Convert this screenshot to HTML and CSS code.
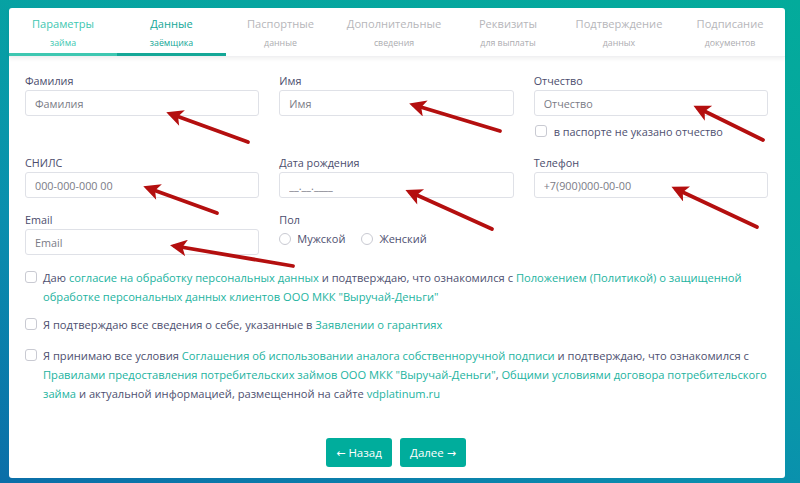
FILE: index.html
```html
<!DOCTYPE html>
<html lang="ru">
<head>
<meta charset="utf-8">
<title>Данные заёмщика</title>
<link rel="stylesheet" href="styles.css">
</head>
<body>
<div class="card">
  <nav class="tabs">
    <div class="tab done"><div class="tt">Параметры</div><div class="ts">займа</div></div>
    <div class="tab active"><div class="tt">Данные</div><div class="ts">заёмщика</div></div>
    <div class="tab"><div class="tt">Паспортные</div><div class="ts">данные</div></div>
    <div class="tab"><div class="tt">Дополнительные</div><div class="ts">сведения</div></div>
    <div class="tab"><div class="tt">Реквизиты</div><div class="ts">для выплаты</div></div>
    <div class="tab"><div class="tt">Подтверждение</div><div class="ts">данных</div></div>
    <div class="tab"><div class="tt">Подписание</div><div class="ts">документов</div></div>
  </nav>
  <form class="form">
    <div class="grid">
      <div class="field">
        <label class="lbl">Фамилия</label>
        <input class="inp" type="text" placeholder="Фамилия">
      </div>
      <div class="field">
        <label class="lbl">Имя</label>
        <input class="inp" type="text" placeholder="Имя">
      </div>
      <div class="field">
        <label class="lbl">Отчество</label>
        <input class="inp" type="text" placeholder="Отчество">
        <div class="check-line"><span class="cb"></span><span>в паспорте не указано отчество</span></div>
      </div>
      <div class="field">
        <label class="lbl">СНИЛС</label>
        <input class="inp" type="text" placeholder="000-000-000 00">
      </div>
      <div class="field">
        <label class="lbl">Дата рождения</label>
        <input class="inp" type="text" placeholder="__.__.____">
      </div>
      <div class="field">
        <label class="lbl">Телефон</label>
        <input class="inp" type="text" placeholder="+7(900)000-00-00">
      </div>
      <div class="field">
        <label class="lbl">Email</label>
        <input class="inp" type="text" placeholder="Email">
      </div>
      <div class="field">
        <label class="lbl">Пол</label>
        <div class="radios">
          <span class="radio"><span class="rc"></span>Мужской</span>
          <span class="radio"><span class="rc"></span>Женский</span>
        </div>
      </div>
    </div>

    <div class="agree a1"><span class="cb"></span><p>Даю <a>согласие на обработку персональных данных</a> и подтверждаю, что ознакомился с <a>Положением (Политикой) о защищенной<br>обработке персональных данных клиентов ООО МКК "Выручай-Деньги"</a></p></div>
    <div class="agree a2"><span class="cb"></span><p>Я подтверждаю все сведения о себе, указанные в <a>Заявлении о гарантиях</a></p></div>
    <div class="agree a3"><span class="cb"></span><p>Я принимаю все условия <a>Соглашения об использовании аналога собственноручной подписи</a> и подтверждаю, что ознакомился с<br><a>Правилами предоставления потребительских займов ООО МКК "Выручай-Деньги"</a>, <a>Общими условиями договора потребительского<br>займа</a> и актуальной информацией, размещенной на сайте <a>vdplatinum.ru</a></p></div>

    <div class="actions">
      <button type="button" class="btn"><span class="arr">←</span> Назад</button>
      <button type="button" class="btn">Далее <span class="arr">→</span></button>
    </div>
  </form>
</div>

<svg class="arrows" width="800" height="483" viewBox="0 0 800 483">
  <defs>
    <marker id="ah" viewBox="0 0 10 10" refX="7" refY="5" markerWidth="4.8" markerHeight="4.4" orient="auto" markerUnits="strokeWidth">
      <path d="M0,0 L10,5 L0,10 L2.5,5 z" fill="#b40f0f"/>
    </marker>
  </defs>
  <g stroke="#b40f0f" stroke-width="3.8" stroke-linecap="round" marker-end="url(#ah)">
    <line x1="248" y1="142" x2="171" y2="114"/>
    <line x1="500" y1="131" x2="414" y2="105"/>
    <line x1="763" y1="140" x2="698" y2="108"/>
    <line x1="217" y1="213" x2="148" y2="188"/>
    <line x1="492" y1="229" x2="410" y2="192"/>
    <line x1="757" y1="227" x2="676" y2="189"/>
    <line x1="293" y1="266" x2="175" y2="246"/>
  </g>
</svg>
</body>
</html>
```

FILE: styles.css
```css
html, body {
  margin: 0;
  padding: 0;
}
body {
  position: relative;
  width: 800px;
  height: 483px;
  overflow: hidden;
  background: linear-gradient(200deg, #03ab9b 0%, #07a3a2 35%, #0a8fae 65%, #0b6ea8 100%);
  font-family: "Open Sans", "Noto Sans", sans-serif;
  color: #4e5070;
}
.card {
  position: absolute;
  left: 9px;
  top: 8px;
  width: 776px;
  height: 470px;
  background: #fff;
  border-radius: 3px;
  box-sizing: border-box;
}
.tabs {
  display: grid;
  grid-template-columns: 108fr 109fr 109fr 118fr 110fr 112fr 110fr;
  box-shadow: 0 2px 4px rgba(0, 0, 0, 0.06);
  border-bottom: 1px solid #f0f0f2;
}
.tab {
  text-align: center;
  padding: 7px 0 3px;
  border-bottom: 3px solid transparent;
  color: #b6b6ba;
}
.tab.done {
  border-bottom-color: #3ec7b1;
  color: #3ec7b1;
}
.tab.active {
  border-bottom-color: #14a797;
  color: #14a797;
}
.tt {
  font-size: 11.1px;
  line-height: 18px;
}
.ts {
  font-size: 8.8px;
  line-height: 14px;
  margin-top: 3px;
}
.tab .ts { color: #acacb0; }
.tab.done .ts { color: #3ec7b1; }
.tab.active .ts { color: #14a797; }

.form {
  padding: 16px 17px 0 16px;
  margin: 0;
}
.grid {
  display: grid;
  grid-template-columns: 1fr 1fr 1fr;
  column-gap: 20px;
  row-gap: 14px;
}
.field {
  display: flex;
  flex-direction: column;
}
.lbl {
  font-size: 10.8px;
  line-height: 16px;
  margin-bottom: 1px;
  color: #4b4d6d;
}
.inp {
  height: 26px;
  box-sizing: border-box;
  border: 1px solid #dfe1e7;
  border-radius: 3px;
  padding: 0 9px;
  font-family: "Open Sans", "Noto Sans", sans-serif;
  font-size: 10.8px;
  color: #555;
  outline: none;
}
.inp::placeholder {
  color: #7a7b86;
}
.check-line {
  display: flex;
  align-items: center;
  gap: 7px;
  margin: 6px 0 1px 1px;
  height: 18px;
  font-size: 10.9px;
}
.cb {
  flex: 0 0 auto;
  width: 12px;
  height: 12px;
  box-sizing: border-box;
  border: 1px solid #c9cad2;
  border-radius: 3px;
  background: #fff;
}
.radios {
  display: flex;
  gap: 16px;
  font-size: 11px;
  line-height: 18px;
  margin-top: 1px;
}
.radio {
  display: flex;
  align-items: center;
  gap: 6px;
}
.rc {
  width: 12px;
  height: 12px;
  box-sizing: border-box;
  border: 1px solid #c9cad2;
  border-radius: 50%;
}
.agree {
  display: flex;
  gap: 6px;
  font-size: 11.15px;
  line-height: 19px;
}
.a1 { margin-top: 13px; }
.a2 { margin-top: 9px; }
.a3 { margin-top: 12px; }
.agree .cb {
  margin-top: 3px;
}
.agree p {
  margin: 0;
  white-space: nowrap;
}
.agree a {
  color: #22b3a0;
  text-decoration: none;
}
.actions {
  display: flex;
  justify-content: center;
  gap: 8px;
  margin-top: 35px;
  padding-right: 1px;
}
.btn {
  height: 29px;
  width: 66px;
  border: none;
  border-radius: 3px;
  background: #00ad9c;
  color: #fff;
  font-family: "Open Sans", "Noto Sans", sans-serif;
  font-size: 11.5px;
  padding: 0;
}
.arr {
  font-family: "DejaVu Sans", sans-serif;
  font-size: 11px;
}
.arrows {
  position: absolute;
  left: 0;
  top: 0;
  pointer-events: none;
}
```
